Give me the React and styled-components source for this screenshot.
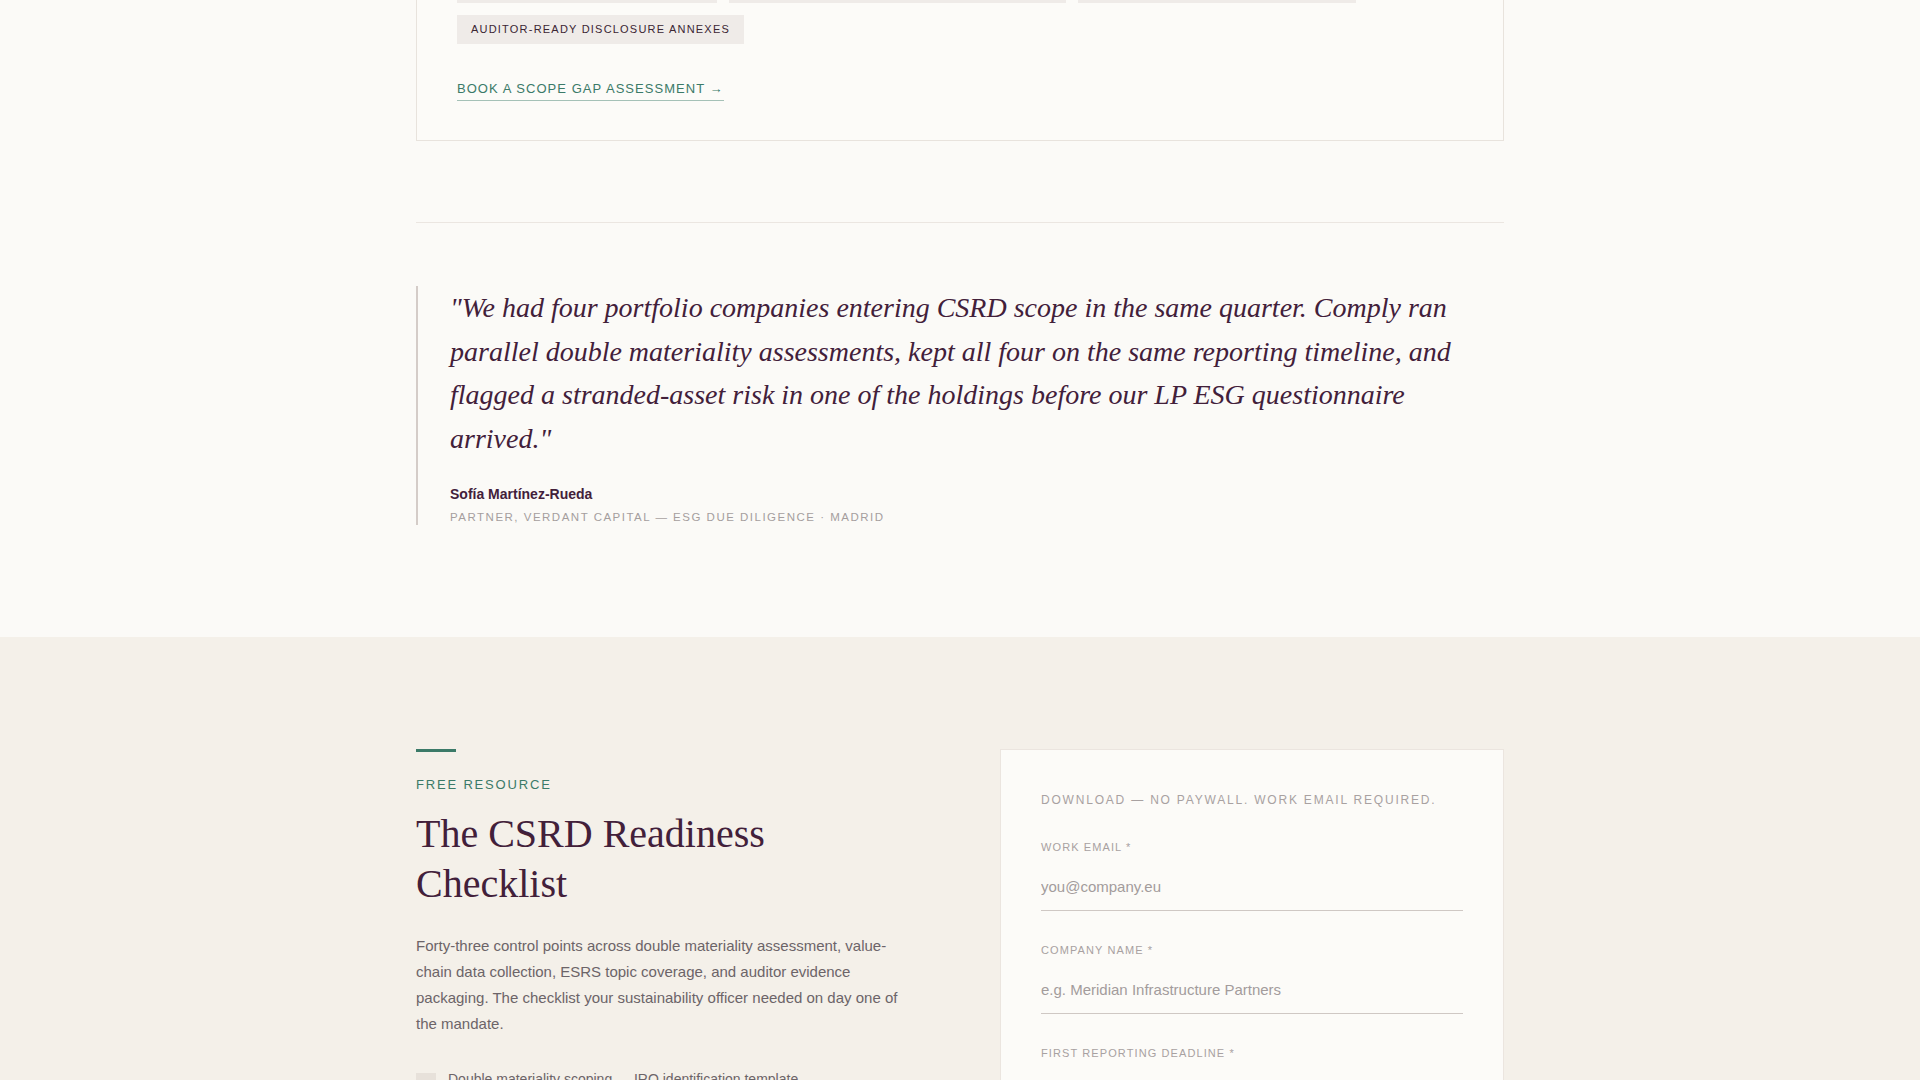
import React from "react";
import styled, { createGlobalStyle } from "styled-components";

const Global = createGlobalStyle`
  * { box-sizing: border-box; }
  html, body { margin: 0; padding: 0; }
  body {
    background: #fbfaf7;
    font-family: "Liberation Sans", Arial, sans-serif;
    color: #42203a;
    overflow: hidden;
  }
`;

const Page = styled.div`
  width: 100%;
  overflow: hidden;
`;

const UpperSection = styled.section`
  background: #fbfaf7;
  padding-bottom: 112px;
`;

const Container = styled.div`
  width: 1088px;
  margin: 0 auto;
`;

const ServiceCard = styled.article`
  margin-top: -67px;
  border: 1px solid #e8e3dd;
  background: #fcfbf8;
  padding: 40px 40px 39px;
`;

const TagList = styled.ul`
  list-style: none;
  margin: 0;
  padding: 0;
  display: flex;
  flex-wrap: wrap;
  gap: 12px;
`;

const Tag = styled.li`
  background: #efebe8;
  color: #3b2633;
  font-size: 11px;
  line-height: 15px;
  letter-spacing: 0.11em;
  text-transform: uppercase;
  padding: 7px 14px;
`;

const CtaRow = styled.div`
  margin-top: 35px;
`;

const CtaLink = styled.a`
  display: inline-block;
  color: #3b7a68;
  font-size: 13px;
  line-height: 18px;
  letter-spacing: 0.08em;
  text-transform: uppercase;
  text-decoration: none;
  padding-bottom: 2px;
  border-bottom: 1px solid rgba(59, 122, 104, 0.45);
`;

const Divider = styled.hr`
  margin: 81px 0 0;
  border: 0;
  height: 1px;
  background: #ebe6e1;
`;

const QuoteWrap = styled.div`
  padding-top: 64px;
`;

const Blockquote = styled.blockquote`
  margin: 0;
  border-left: 2px solid #d4ccc8;
  padding-left: 32px;
`;

const QuoteText = styled.p`
  margin: -1px 0 25px;
  font-family: "Liberation Serif", "Times New Roman", serif;
  font-style: italic;
  font-size: 28px;
  line-height: 43.5px;
  color: #42203a;
`;

const Author = styled.div`
  font-size: 14px;
  line-height: 19.5px;
  font-weight: 700;
  color: #42203a;
`;

const Role = styled.div`
  margin-top: 4px;
  font-size: 11.5px;
  line-height: 16.5px;
  letter-spacing: 0.13em;
  text-transform: uppercase;
  color: #a59e9e;
`;

const ResourceSection = styled.section`
  background: #f4f0e9;
  padding: 112px 0 112px;
`;

const ResourceGrid = styled.div`
  width: 1088px;
  margin: 0 auto;
  display: grid;
  grid-template-columns: 1fr 1fr;
  gap: 80px;
  align-items: start;
`;

const Accent = styled.div`
  width: 40px;
  height: 3px;
  background: #3b7a68;
  margin-bottom: 23.5px;
`;

const Eyebrow = styled.div`
  font-size: 13px;
  line-height: 18px;
  letter-spacing: 0.14em;
  text-transform: uppercase;
  color: #3b7a68;
`;

const Title = styled.h2`
  margin: 15.5px 0 0;
  font-family: "Liberation Serif", "Times New Roman", serif;
  font-weight: 400;
  font-size: 40px;
  line-height: 50.4px;
  color: #42203a;
`;

const Body = styled.p`
  margin: 23px 0 0;
  max-width: 490px;
  font-size: 15px;
  line-height: 26px;
  color: #6c6468;
`;

const Checklist = styled.ul`
  list-style: none;
  margin: 31px 0 0;
  padding: 0;
  display: flex;
  flex-direction: column;
  gap: 14px;
`;

const CheckItem = styled.li`
  display: flex;
  align-items: flex-start;
  gap: 12px;
  font-size: 14px;
  line-height: 22.4px;
  color: #6c6468;
`;

const CheckBox = styled.span`
  flex: 0 0 20px;
  width: 20px;
  height: 20px;
  margin-top: 5px;
  background: #e7e1da;
`;

const FormCard = styled.form`
  border: 1px solid #ebe5df;
  background: #fcfbf8;
  padding: 42.5px 40px 40px;
`;

const FormNote = styled.p`
  margin: 0 0 33px;
  font-size: 12px;
  line-height: 14px;
  letter-spacing: 0.15em;
  text-transform: uppercase;
  color: #a8a1a1;
`;

const Field = styled.div`
  display: flex;
  flex-direction: column;
  & + & {
    margin-top: 32px;
  }
`;

const Label = styled.label`
  font-size: 11px;
  line-height: 14px;
  letter-spacing: 0.1em;
  text-transform: uppercase;
  color: #a8a1a1;
  margin-bottom: 9px;
`;

const Input = styled.input`
  font-family: "Liberation Sans", Arial, sans-serif;
  font-size: 15px;
  line-height: 20px;
  height: 48px;
  padding: 14px 0 13px;
  border: 0;
  border-bottom: 1px solid #cfc8c4;
  background: transparent;
  color: #42203a;
  outline: none;
  &::placeholder {
    color: #a39c9c;
  }
`;

const Select = styled.select`
  font-family: "Liberation Sans", Arial, sans-serif;
  font-size: 15px;
  height: 48px;
  padding: 14px 0;
  border: 0;
  border-bottom: 1px solid #cfc8c4;
  background: transparent;
  color: #a39c9c;
  appearance: none;
`;

const tagsTop = [
  "Double materiality assessment",
  "Value-chain data collection across tiers",
  "ESRS E1–G1 datapoint gap mapping",
];

const checklist = [
  "Double materiality scoping — IRO identification template",
  "Value-chain data request matrix for Tier 1 suppliers",
  "ESRS datapoint coverage tracker",
];

export default function App() {
  return (
    <Page>
      <Global />
      <UpperSection>
        <Container>
          <ServiceCard>
            <TagList>
              {tagsTop.map((t) => (
                <Tag key={t}>{t}</Tag>
              ))}
              <Tag>Auditor-ready disclosure annexes</Tag>
            </TagList>
            <CtaRow>
              <CtaLink href="#">Book a scope gap assessment →</CtaLink>
            </CtaRow>
          </ServiceCard>
          <Divider />
          <QuoteWrap>
            <Blockquote>
              <QuoteText>
                "We had four portfolio companies entering CSRD scope in the same
                quarter. Comply ran parallel double materiality assessments, kept
                all four on the same reporting timeline, and flagged a
                stranded-asset risk in one of the holdings before our LP ESG
                questionnaire arrived."
              </QuoteText>
              <Author>Sofía Martínez-Rueda</Author>
              <Role>Partner, Verdant Capital — ESG Due Diligence · Madrid</Role>
            </Blockquote>
          </QuoteWrap>
        </Container>
      </UpperSection>
      <ResourceSection>
        <ResourceGrid>
          <div>
            <Accent />
            <Eyebrow>Free resource</Eyebrow>
            <Title>The CSRD Readiness Checklist</Title>
            <Body>
              Forty-three control points across double materiality assessment,
              value-chain data collection, ESRS topic coverage, and auditor
              evidence packaging. The checklist your sustainability officer
              needed on day one of the mandate.
            </Body>
            <Checklist>
              {checklist.map((c) => (
                <CheckItem key={c}>
                  <CheckBox />
                  {c}
                </CheckItem>
              ))}
            </Checklist>
          </div>
          <FormCard onSubmit={(e) => e.preventDefault()}>
            <FormNote>Download — no paywall. Work email required.</FormNote>
            <Field>
              <Label htmlFor="email">Work email *</Label>
              <Input id="email" type="email" placeholder="you@company.eu" />
            </Field>
            <Field>
              <Label htmlFor="company">Company name *</Label>
              <Input
                id="company"
                type="text"
                placeholder="e.g. Meridian Infrastructure Partners"
              />
            </Field>
            <Field>
              <Label htmlFor="deadline">First reporting deadline *</Label>
              <Select id="deadline" defaultValue="">
                <option value="">Select reporting year</option>
                <option>FY2025</option>
                <option>FY2026</option>
              </Select>
            </Field>
          </FormCard>
        </ResourceGrid>
      </ResourceSection>
    </Page>
  );
}
